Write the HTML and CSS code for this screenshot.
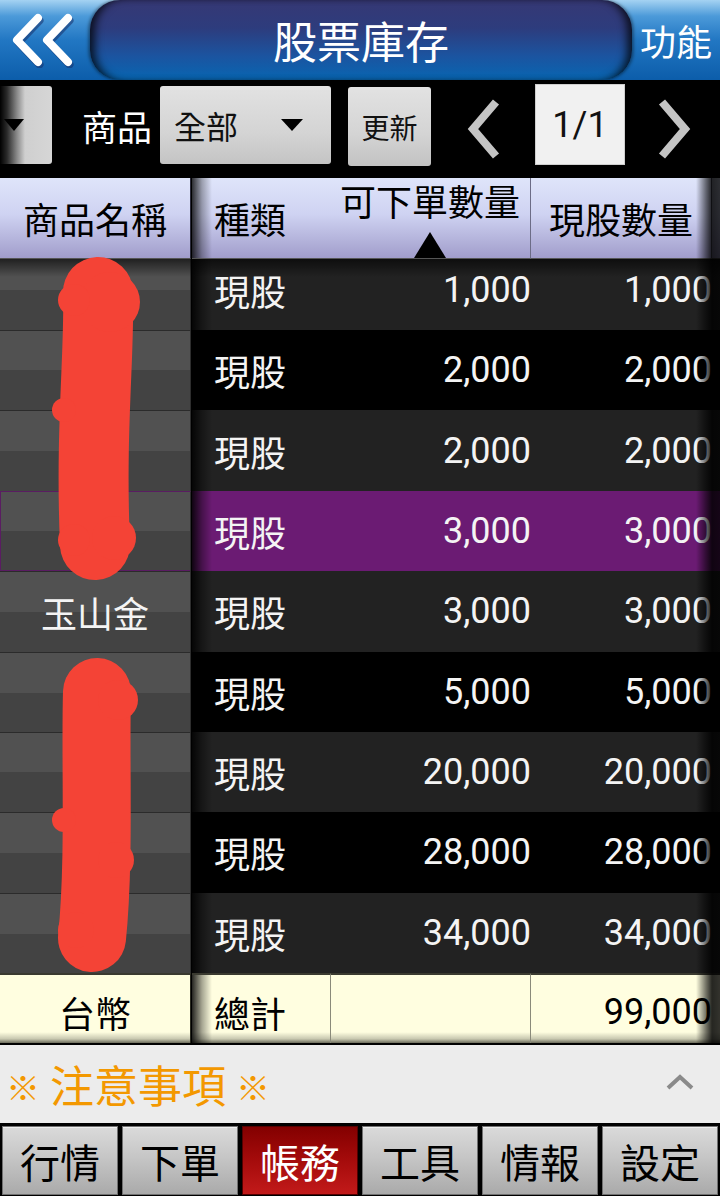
FILE: index.html
```html
<!DOCTYPE html>
<html lang="zh-Hant">
<head>
<meta charset="utf-8">
<title>股票庫存</title>
<link rel="stylesheet" href="styles.css">
</head>
<body>
<div class="app">
  <header class="topbar">
    <div class="back">
      <svg width="70" height="56" viewBox="0 0 70 56">
        <g fill="none" stroke="#16306a" stroke-opacity="0.55" stroke-width="8" stroke-linecap="round" stroke-linejoin="round" transform="translate(1.5,2.5)">
          <polyline points="28,6 7,28 28,50"/>
          <polyline points="58,6 37,28 58,50"/>
        </g>
        <g fill="none" stroke="#fff" stroke-width="8" stroke-linecap="round" stroke-linejoin="round">
          <polyline points="28,6 7,28 28,50"/>
          <polyline points="58,6 37,28 58,50"/>
        </g>
      </svg>
    </div>
    <div class="title">股票庫存</div>
    <div class="func">功能</div>
  </header>

  <div class="toolbar">
    <div class="stub"><span class="tri"></span></div>
    <div class="label">商品</div>
    <div class="select"><span>全部</span><span class="tri"></span></div>
    <div class="btn">更新</div>
    <div class="pager-arrow">
      <svg width="34" height="60" viewBox="0 0 34 60"><polyline points="29,3 6,30 29,57" fill="none" stroke="#c4c4c4" stroke-width="8"/></svg>
    </div>
    <div class="page">1/1</div>
    <div class="pager-arrow">
      <svg width="34" height="60" viewBox="0 0 34 60"><polyline points="5,3 28,30 5,57" fill="none" stroke="#c4c4c4" stroke-width="8"/></svg>
    </div>
  </div>

  <div class="table">
    <div class="row thead">
      <div class="c1">商品名稱</div>
      <div class="c2">種類</div>
      <div class="c3"><span>可下單數量</span><span class="sort"></span></div>
      <div class="c4">現股數量</div>
      <div class="c5"></div>
    </div>

    <div class="tbody">
      <div class="row data odd"><div class="c1"></div><div class="c2">現股</div><div class="c3">1,000</div><div class="c4">1,000</div><div class="c5"></div></div>
      <div class="row data even"><div class="c1"></div><div class="c2">現股</div><div class="c3">2,000</div><div class="c4">2,000</div><div class="c5"></div></div>
      <div class="row data odd"><div class="c1"></div><div class="c2">現股</div><div class="c3">2,000</div><div class="c4">2,000</div><div class="c5"></div></div>
      <div class="row data sel"><div class="c1"></div><div class="c2">現股</div><div class="c3">3,000</div><div class="c4">3,000</div><div class="c5"></div></div>
      <div class="row data odd"><div class="c1">玉山金</div><div class="c2">現股</div><div class="c3">3,000</div><div class="c4">3,000</div><div class="c5"></div></div>
      <div class="row data even"><div class="c1"></div><div class="c2">現股</div><div class="c3">5,000</div><div class="c4">5,000</div><div class="c5"></div></div>
      <div class="row data odd"><div class="c1"></div><div class="c2">現股</div><div class="c3">20,000</div><div class="c4">20,000</div><div class="c5"></div></div>
      <div class="row data even"><div class="c1"></div><div class="c2">現股</div><div class="c3">28,000</div><div class="c4">28,000</div><div class="c5"></div></div>
      <div class="row data odd"><div class="c1"></div><div class="c2">現股</div><div class="c3">34,000</div><div class="c4">34,000</div><div class="c5"></div></div>
    </div>

    <div class="row tfoot">
      <div class="c1">台幣</div>
      <div class="c2">總計</div>
      <div class="c3"></div>
      <div class="c4">99,000</div>
      <div class="c5"></div>
    </div>

    <div class="edge-shade"></div>

    <svg class="scribble" width="190" height="865" viewBox="0 178 190 865">
      <g fill="#f44336" stroke="#f44336" stroke-linecap="round">
        <path d="M98 292 C 100 350, 90 430, 95 545" fill="none" stroke-width="70"/>
        <circle cx="110" cy="302" r="30" stroke="none"/>
        <circle cx="74" cy="300" r="16" stroke="none"/>
        <circle cx="114" cy="538" r="22" stroke="none"/>
        <circle cx="74" cy="540" r="16" stroke="none"/>
        <circle cx="64" cy="410" r="12" stroke="none"/>
        <path d="M97 692 C 95 760, 100 860, 92 938" fill="none" stroke-width="68"/>
        <circle cx="118" cy="700" r="20" stroke="none"/>
        <circle cx="116" cy="860" r="18" stroke="none"/>
        <circle cx="76" cy="930" r="18" stroke="none"/>
        <circle cx="64" cy="820" r="12" stroke="none"/>
      </g>
    </svg>
  </div>

  <div class="notes">
    <span class="mark">※</span><span class="notes-text">注意事項</span><span class="mark">※</span>
    <svg class="up" width="30" height="18" viewBox="0 0 30 18"><polyline points="3,15 15,4 27,15" fill="none" stroke="#8a8a8a" stroke-width="4"/></svg>
  </div>

  <nav class="tabs">
    <div class="tab">行情</div>
    <div class="tab">下單</div>
    <div class="tab active">帳務</div>
    <div class="tab">工具</div>
    <div class="tab">情報</div>
    <div class="tab">設定</div>
  </nav>
</div>
</body>
</html>
```

FILE: styles.css
```css
* { box-sizing: border-box; margin: 0; padding: 0; }
html, body { width: 720px; height: 1196px; overflow: hidden; background: #000; }
body { font-family: Roboto, "Noto Sans CJK TC", sans-serif; color: #000; }

.app { width: 720px; height: 1196px; display: flex; flex-direction: column; background: #000; }

/* top bar */
.topbar {
  height: 80px; flex: none; display: flex;
  background: linear-gradient(180deg, #a4d2f2 0%, #4c9ad9 20%, #2277c3 50%, #0c5daa 100%);
}
.back { width: 90px; flex: none; display: flex; align-items: center; padding-left: 10px; }
.title {
  flex: 1; border-radius: 30px;
  background: linear-gradient(180deg, #363874 0%, #2d3c7d 35%, #1b54a0 70%, #0866b2 100%);
  box-shadow: inset 9px 0 8px -4px rgba(0,0,0,.75), inset -9px 0 8px -4px rgba(0,0,0,.75), -2px 0 3px rgba(0,0,0,.35), 2px 0 3px rgba(0,0,0,.35);
  color: #fff; font-size: 44px; display: flex; align-items: center; justify-content: center;
  font-family: "Noto Sans CJK TC", sans-serif;
}
.func {
  width: 88px; flex: none; color: #fff; font-size: 36px;
  display: flex; align-items: center; justify-content: center;
  font-family: "Noto Sans CJK TC", sans-serif;
}

/* toolbar */
.toolbar { height: 98px; flex: none; display: flex; align-items: flex-start; font-family: "Noto Sans CJK TC", sans-serif; }
.tri { display: block; width: 0; height: 0; border-left: 11px solid transparent; border-right: 11px solid transparent; border-top: 12px solid #000; }
.stub {
  width: 52px; height: 78px; margin-top: 6px; border-radius: 0 3px 3px 0;
  background: linear-gradient(90deg, #000 0, #2a2a2a 7px, #8a8a8a 17px, #cfcfcf 25px, #d6d6d6 100%);
  display: flex; align-items: center; padding-left: 4px;
}
.stub .tri { border-left-width: 10px; border-right-width: 10px; }
.label { width: 78px; margin-left: 30px; height: 78px; margin-top: 6px; color: #fff; font-size: 35px; display: flex; align-items: center; }
.select {
  width: 171px; height: 78px; margin-top: 6px; border-radius: 3px;
  background: linear-gradient(180deg, #e2e2e2 0%, #d4d4d4 60%, #c4c4c4 100%);
  display: flex; align-items: center; justify-content: space-between; padding: 0 28px 0 14px;
  font-size: 32px; color: #111;
}
.btn {
  width: 83px; height: 79px; margin-top: 7px; margin-left: 17px; border-radius: 3px;
  background: linear-gradient(180deg, #e2e2e2 0%, #d4d4d4 60%, #c2c2c2 100%);
  display: flex; align-items: center; justify-content: center; font-size: 28px; color: #111;
}
.pager-arrow { width: 104px; height: 98px; display: flex; align-items: center; justify-content: center; padding-left: 2px; }
.pager-arrow:last-child { width: 95px; }
.page {
  width: 90px; height: 81px; margin-top: 4px; background: #f1f1f1; border: 1px solid #cfcfcf;
  display: flex; align-items: center; justify-content: center;
  font-family: Roboto, sans-serif; font-size: 36px; color: #111;
}

/* table */
.table { position: relative; flex: none; height: 865px; overflow: hidden; }
.row { display: flex; }
.row > div { flex: none; display: flex; align-items: center; white-space: nowrap; overflow: hidden; }
.c1 { width: 191px; margin-right: 1px; justify-content: center; font-size: 36px; }
.c2 { width: 139px; padding-left: 22px; font-size: 36px; background-image: linear-gradient(90deg, rgba(0,0,0,.85) 0, rgba(0,0,0,.35) 10px, rgba(0,0,0,0) 20px); }
.c3 { width: 200px; justify-content: flex-end; font-size: 36px; }
.c4 { width: 181px; justify-content: flex-end; font-size: 36px; }
.c5 { width: 8px; font-size: 36px; }

.thead { height: 81px; background: #000; }
.thead .c1 { background: linear-gradient(180deg, #dfe5fa 0%, #cfd3f2 45%, #a19dcb 100%); border-right: 1px solid #2a2a3a; width: 191px; border-bottom: 1px solid #555; }
.thead .c2 { background: linear-gradient(90deg, rgba(0,0,0,.8) 0, rgba(0,0,0,.3) 10px, rgba(0,0,0,0) 20px), linear-gradient(180deg, #dfe5fa 0%, #cfd3f2 45%, #a19dcb 100%); border-right: 1px solid #6c6c86; border-bottom: 1px solid #555; }
.thead .c3 { background: linear-gradient(180deg, #dfe5fa 0%, #cfd3f2 45%, #a19dcb 100%); flex-direction: column; justify-content: space-between; align-items: center; padding-top: 4px; width: 201px; margin-left: -1px; border-right: 1px solid #6c6c86; border-bottom: 1px solid #555; }
.thead .c4 { background: linear-gradient(180deg, #dfe5fa 0%, #cfd3f2 45%, #a19dcb 100%); justify-content: center; border-right: 1px solid #55556a; border-bottom: 1px solid #555; }
.thead .c5 { background: linear-gradient(180deg, #dfe5fa 0%, #cfd3f2 45%, #a19dcb 100%); border-bottom: 1px solid #555; }
.thead .c3 span:first-child { line-height: 44px; }
.sort { display: block; width: 0; height: 0; border-left: 16px solid transparent; border-right: 16px solid transparent; border-bottom: 26px solid #000; }

.tbody { height: 714px; overflow: hidden; position: relative; }
.tbody::before {
  content: ""; position: absolute; left: 0; right: 0; top: 0; height: 18px; z-index: 2;
  background: linear-gradient(180deg, rgba(0,0,0,.6), rgba(0,0,0,0));
}
.data { height: 80.375px; background: #000; color: #f4f4f4; }
.data:first-child { margin-top: -9.375px; }
.data .c1 { background: linear-gradient(180deg, #515151 0, #515151 50%, #434343 50%, #434343 100%); border-top: 1px solid #2b2b2b; border-right: 1px solid #2e2e2e; }
.data.odd .c2, .data.odd .c3, .data.odd .c4, .data.odd .c5 { background-color: #222; }
.data.even .c2, .data.even .c3, .data.even .c4, .data.even .c5 { background-color: #000; }
.data.sel .c2, .data.sel .c3, .data.sel .c4, .data.sel .c5 { background-color: #6b1b73; }
.data.sel .c1 { border-top: 1px solid #5a1c62; box-shadow: inset 1px 0 0 #5a1c62, inset 0 -1px 0 #5a1c62; }

.tfoot { height: 70px; background: #000; color: #000; }
.tfoot > div { padding-top: 6px; border-top: 2px solid #3a3a30; }
.tfoot .c1 { background: linear-gradient(180deg, #fffee0 0, #fffee0 84%, #c8c8b0 94%, #6a6a5a 100%); border-right: 1px solid #2a2a20; }
.tfoot .c2 { background: linear-gradient(90deg, rgba(0,0,0,.85) 0, rgba(0,0,0,.35) 10px, rgba(0,0,0,0) 20px), linear-gradient(180deg, #fffee0 0, #fffee0 84%, #c8c8b0 94%, #6a6a5a 100%); border-right: 1px solid #8a8a7a; }
.tfoot .c3 { background: linear-gradient(180deg, #fffee0 0, #fffee0 84%, #c8c8b0 94%, #6a6a5a 100%); border-right: 1px solid #8a8a7a; }
.tfoot .c4, .tfoot .c5 { background: linear-gradient(180deg, #fffee0 0, #fffee0 84%, #c8c8b0 94%, #6a6a5a 100%); }

.edge-shade {
  position: absolute; top: 0; bottom: 0; right: 0; width: 24px; z-index: 3;
  background: linear-gradient(90deg, rgba(0,0,0,0) 0, rgba(0,0,0,.55) 10px, rgba(0,0,0,.85) 16px, rgba(0,0,0,.8) 100%);
}
.scribble { position: absolute; left: 0; top: 0; z-index: 4; }

/* notes */
.notes {
  height: 78px; margin-top: 2px; flex: none; background: #ececec;
  display: flex; align-items: center; padding-left: 6px;
  font-family: "Noto Sans CJK TC", sans-serif; color: #f39800;
}
.mark { font-size: 34px; font-weight: 700; margin-top: 4px; }
.notes-text { font-size: 44px; margin: 0 10px 0 10px; }
.up { margin-left: auto; margin-right: 25px; margin-top: -4px; }

/* tabs */
.tabs {
  height: 73px; flex: none; display: flex; gap: 4px; padding: 3px 2px 1px 2px; background: #000;
}
.tab {
  width: 116px; height: 69px; flex: none;
  background: linear-gradient(180deg, #dadada 0%, #c6c6c6 45%, #aaaaaa 100%);
  border: 1px solid #707070; box-shadow: inset 0 1px 0 #eee;
  display: flex; align-items: center; justify-content: center;
  font-family: "Noto Sans CJK TC", sans-serif; font-size: 40px; color: #000;
}
.tab.active { background: linear-gradient(180deg, #830000 0%, #a20a0a 45%, #c21a1a 100%); color: #fff; border-color: #500; box-shadow: none; }
```
